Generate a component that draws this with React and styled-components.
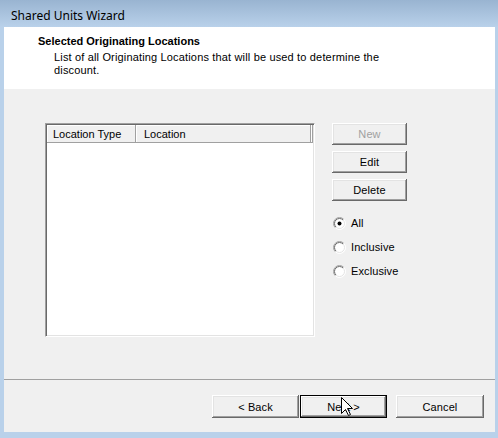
import React from 'react';
import styled, { createGlobalStyle } from 'styled-components';

const Global = createGlobalStyle`
  html, body { margin: 0; padding: 0; }
  body {
    width: 498px; height: 438px; overflow: hidden;
    font-family: "Liberation Sans", Arial, sans-serif;
    font-size: 11px; color: #000;
  }
`;

const Window = styled.div`
  position: relative;
  width: 498px; height: 438px; box-sizing: border-box;
  padding: 0 3px 6px 4px;
  display: flex; flex-direction: column;
  background: linear-gradient(to bottom, #99b4d1 0px, #b9d1ea 27px, #b9d1ea 100%);
`;

const TitleBar = styled.div`
  height: 27px; flex: none;
  display: flex; align-items: center;
  padding-left: 7px; padding-top: 3px; box-sizing: border-box;
  font-family: "Noto Sans", "Open Sans", sans-serif;
  font-size: 12px; color: #000;
`;

const Client = styled.div`
  flex: 1; display: flex; flex-direction: column;
  background: #f0f0f0;
`;

const Header = styled.div`
  height: 62px; flex: none; box-sizing: border-box;
  background: #fff;
  padding: 8px 0 0 34px;
`;

const HeaderTitle = styled.div`
  font-weight: bold; line-height: 13px;
`;

const HeaderText = styled.div`
  margin: 3px 0 0 16px; line-height: 13px; width: 345px;
  letter-spacing: 0.16px;
`;

const Body = styled.div`
  flex: 1; display: flex; gap: 17px;
  padding: 34px 0 0 41px;
`;

const ListBox = styled.div`
  width: 270px; height: 214px; box-sizing: border-box;
  background: #fff;
  border: 1px solid; border-color: #a0a0a0 #fff #fff #a0a0a0;
  box-shadow: inset 1px 1px #696969, inset -1px -1px #e3e3e3;
  padding: 1px;
`;

const HeaderRow = styled.div`
  display: flex; height: 18px;
`;

const HeaderCell = styled.div`
  width: ${p => p.$w}px; flex: ${p => (p.$grow ? 1 : 'none')};
  box-sizing: border-box;
  display: flex; align-items: center;
  padding-left: ${p => p.$pad}px;
  background: #f0f0f0;
  border-right: 1px solid #a0a0a0; border-bottom: 1px solid #a0a0a0;
  box-shadow: inset 1px 1px #fff;
`;

const SideColumn = styled.div`
  width: 75px; display: flex; flex-direction: column; gap: 6px;
`;

const Button = styled.button`
  width: ${p => p.$w}px; height: ${p => p.$h}px;
  box-sizing: border-box; padding: 0; margin: 0;
  font-family: "Liberation Sans", Arial, sans-serif; font-size: 11px;
  letter-spacing: 0.1px;
  color: ${p => (p.disabled ? '#a0a0a0' : '#000')};
  background: #f0f0f0;
  border: ${p => (p.$default ? '1px solid #000' : 'none')};
  box-shadow: inset -1px -1px #696969, inset 1px 1px #fff,
    inset -2px -2px #a0a0a0, inset 2px 2px #e3e3e3;
  outline: none;
`;

const RadioGroup = styled.div`
  margin-top: 4px; display: flex; flex-direction: column;
`;

const RadioRow = styled.label`
  height: 24px; display: flex; align-items: center; gap: 5px;
  padding-left: 1px; letter-spacing: 0.1px;
`;

const Separator = styled.div`
  flex: none; height: 1px; background: #a0a0a0;
`;

const Footer = styled.div`
  height: 52px; flex: none; box-sizing: border-box;
  display: flex; justify-content: flex-end; align-items: flex-start;
  padding: 15px 11px 0 0;
`;

const Gap = styled.div`
  width: ${p => p.$w}px;
`;

const Cursor = styled.svg`
  position: absolute; left: 341px; top: 397px;
`;

function Radio({ checked }) {
  return (
    <svg width="13" height="13" viewBox="0 0 13 13">
      <defs>
        <linearGradient id="rg" x1="0" y1="0" x2="1" y2="1">
          <stop offset="0.45" stopColor="#a0a0a0" />
          <stop offset="0.55" stopColor="#ffffff" />
        </linearGradient>
        <linearGradient id="rg2" x1="0" y1="0" x2="1" y2="1">
          <stop offset="0.45" stopColor="#696969" />
          <stop offset="0.55" stopColor="#e3e3e3" />
        </linearGradient>
      </defs>
      <circle cx="6.5" cy="6.5" r="6" fill="#fff" stroke="url(#rg)" strokeWidth="1" />
      <circle cx="6.5" cy="6.5" r="5" fill="#fff" stroke="url(#rg2)" strokeWidth="1" />
      {checked && <circle cx="6.5" cy="6.5" r="2" fill="#000" />}
    </svg>
  );
}

export default function App() {
  return (
    <>
      <Global />
      <Window>
        <TitleBar>Shared Units Wizard</TitleBar>
        <Client>
          <Header>
            <HeaderTitle>Selected Originating Locations</HeaderTitle>
            <HeaderText>
              List of all Originating Locations that will be used to determine the discount.
            </HeaderText>
          </Header>
          <Body>
            <ListBox>
              <HeaderRow>
                <HeaderCell $w={89} $pad={6}>Location Type</HeaderCell>
                <HeaderCell $w={175} $pad={8}>Location</HeaderCell>
                <HeaderCell $grow $pad={0} />
              </HeaderRow>
            </ListBox>
            <SideColumn>
              <Button $w={75} $h={22} disabled>New</Button>
              <Button $w={75} $h={22}>Edit</Button>
              <Button $w={75} $h={22}>Delete</Button>
              <RadioGroup>
                <RadioRow><Radio checked />All</RadioRow>
                <RadioRow><Radio />Inclusive</RadioRow>
                <RadioRow><Radio />Exclusive</RadioRow>
              </RadioGroup>
            </SideColumn>
          </Body>
          <Separator />
          <Footer>
            <Button $w={87} $h={23}>&lt; Back</Button>
            <Gap $w={1} />
            <Button $w={87} $h={23} $default>Next &gt;</Button>
            <Gap $w={9} />
            <Button $w={88} $h={23}>Cancel</Button>
          </Footer>
        </Client>
        <Cursor width="13" height="20" viewBox="0 0 13 20">
          <polygon
            points="0.5,0.5 0.5,16.5 4.5,12.5 7.5,18.5 9.5,17.5 6.5,11.5 11.5,11.5"
            fill="#fff" stroke="#000" strokeWidth="1" strokeLinejoin="miter"
          />
        </Cursor>
      </Window>
    </>
  );
}
